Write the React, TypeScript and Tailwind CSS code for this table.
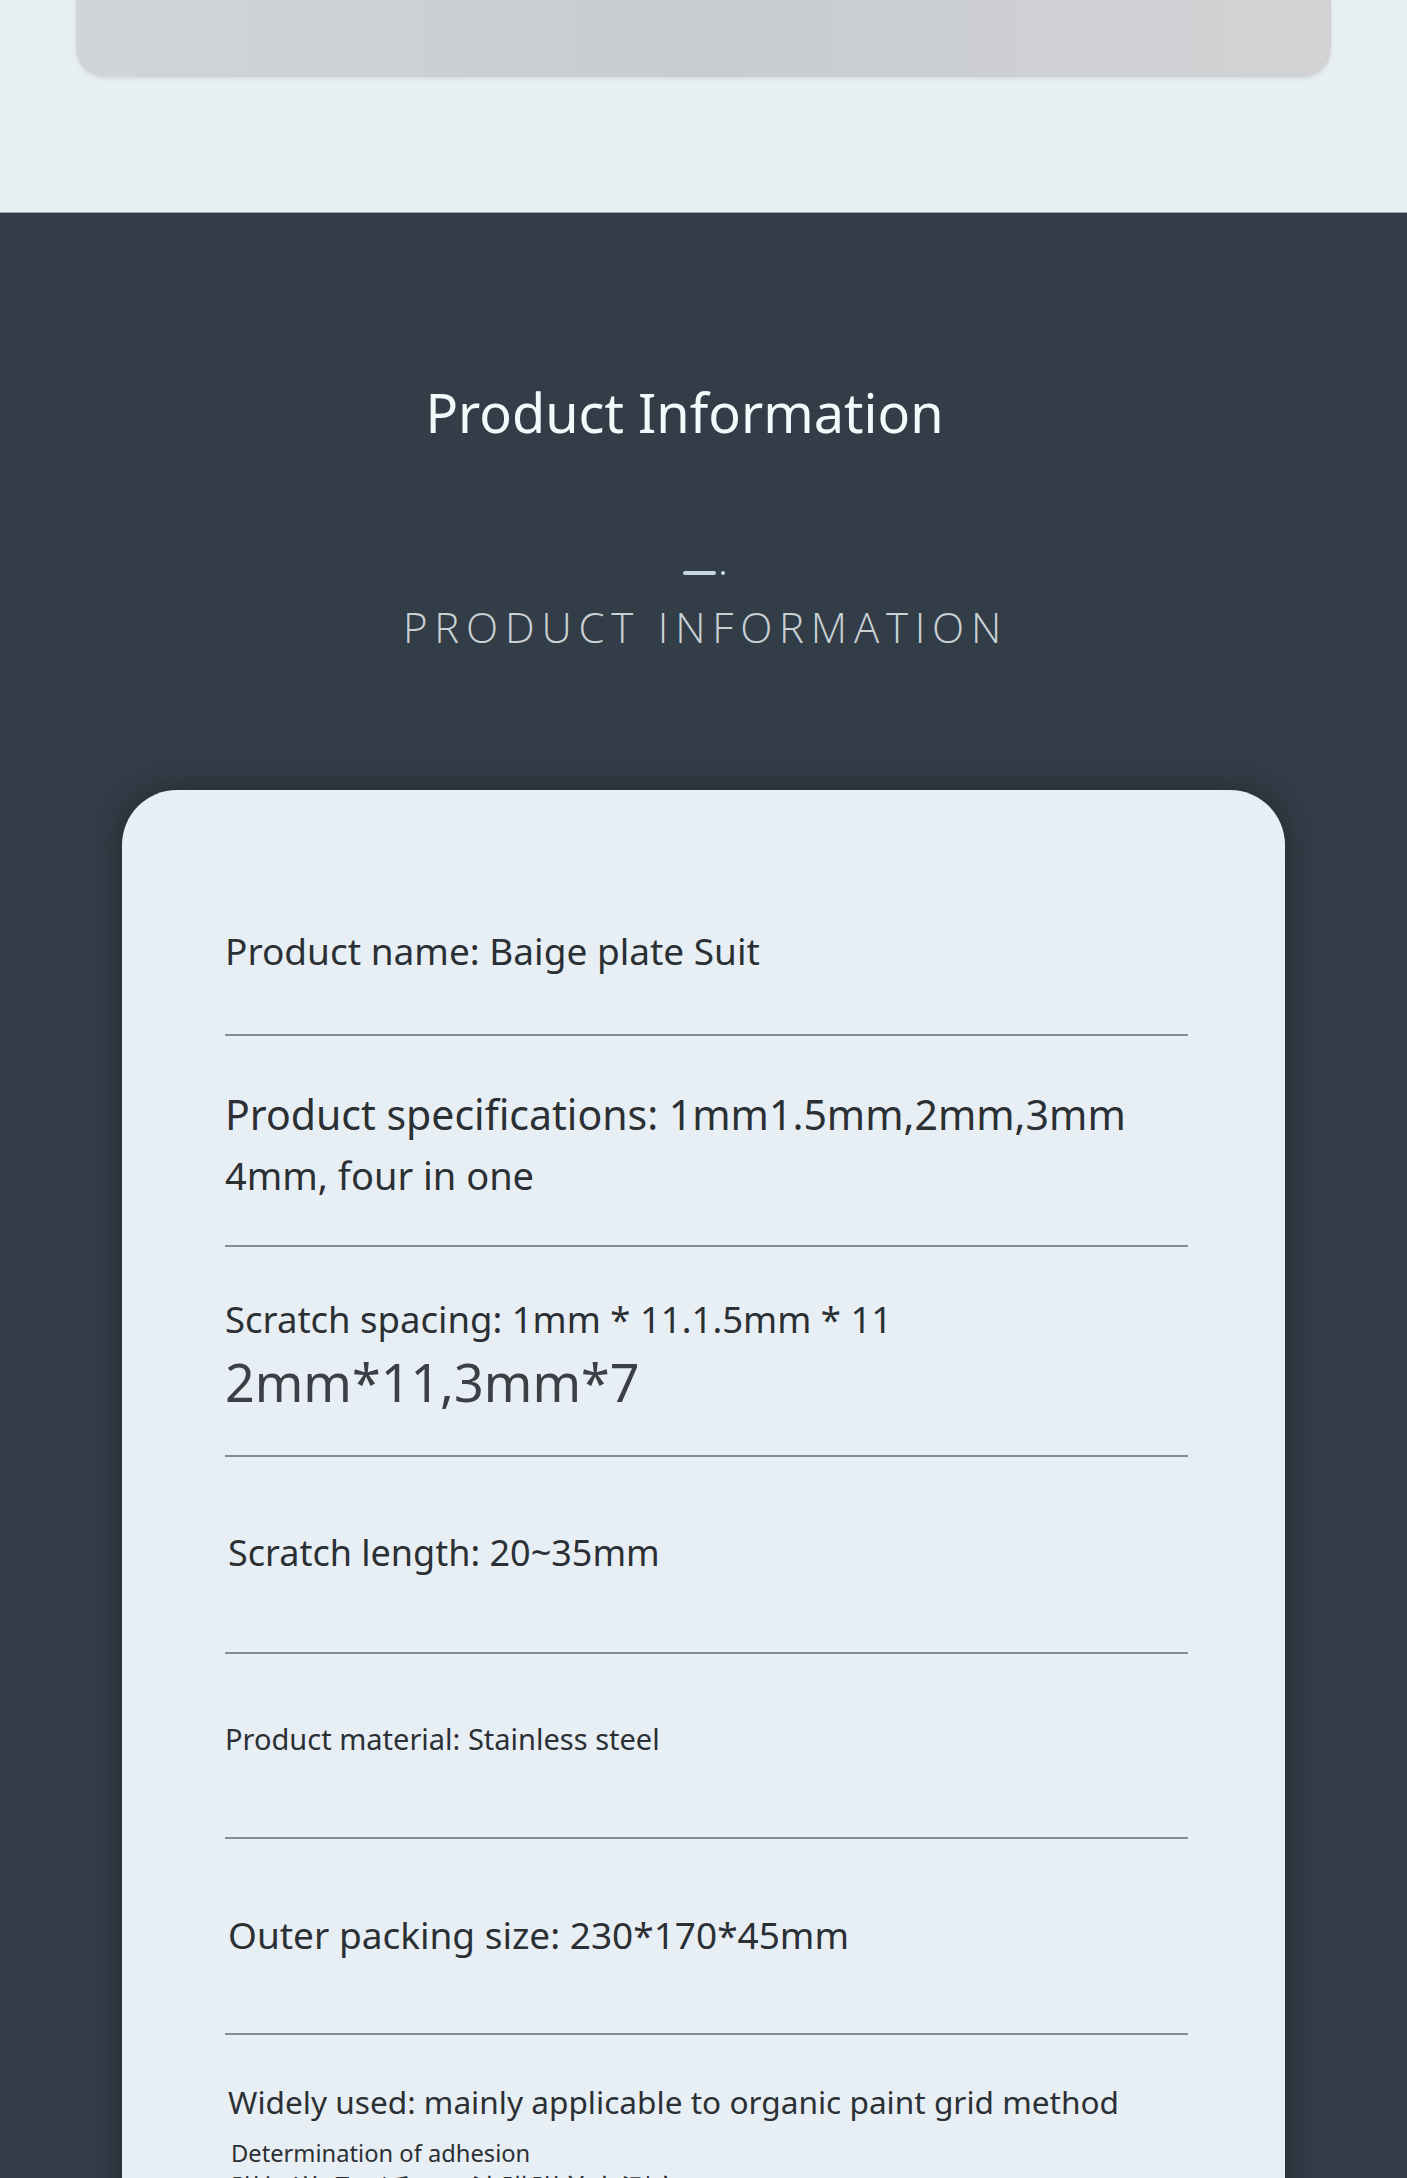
import React from "react";

const rowFont = { fontFamily: '"Noto Sans", "Noto Sans CJK SC", sans-serif' };

function Divider() {
  return <div className="h-[2px] w-full bg-[#868c93]" />;
}

export default function App() {
  return (
    <div className="min-h-[2178px] w-full overflow-hidden bg-[#333d47]" style={rowFont}>
      {/* top strip with the end of the previous picture */}
      <div className="h-[212px] bg-[#e8eff3] px-[76px]">
        <div className="h-[77px] w-full rounded-b-[28px] bg-linear-to-r from-[#d2d5d8] via-[#c8ccd0] to-[#d3d3d5] shadow-[0_2px_4px_rgba(0,0,0,0.08)]" />
      </div>

      <section className="border-t border-[#9aa6ae] pt-[167px]">
        <div className="flex justify-center pr-[38px]">
          <h1 className="text-[54px] leading-[64px] font-normal text-[#f2fbfc]">Product Information</h1>
        </div>

        <div className="mt-[127px] flex justify-center gap-[5px] items-center">
          <span className="block h-[4px] w-[33px] rounded-full bg-[#c6d6df]" />
          <span className="block h-[4px] w-[4px] rounded-full bg-[#c6d6df]" />
        </div>

        <div className="mt-[27px] flex justify-center pl-[4px]">
          <p
            className="text-[42px] leading-[50px] font-light tracking-[6.8px] text-[#c9d1d6]"
            style={{ fontFamily: '"Open Sans", "Noto Sans", sans-serif' }}
          >
            PRODUCT INFORMATION
          </p>
        </div>

        <div className="mx-[122px] mt-[138px] rounded-t-[55px] bg-[#e8eff4] pl-[103px] pr-[97px] shadow-[0_0_30px_rgba(0,0,0,0.35)] text-[#2b3035]">
          <div className="h-[244px] pt-[136px]">
            <p className="text-[37px] leading-[50px]">Product name: Baige plate Suit</p>
          </div>
          <Divider />

          <div className="h-[209px] pt-[48px]">
            <p className="text-[41px] leading-[61px]">Product specifications: 1mm1.5mm,2mm,3mm</p>
            <p className="text-[38px] leading-[61px]">4mm, four in one</p>
          </div>
          <Divider />

          <div className="h-[208px] pt-[50px]">
            <p className="text-[36.5px] leading-[44px]">Scratch spacing: 1mm * 11.1.5mm * 11</p>
            <p className="mt-[12px] text-[52px] leading-[58px] text-[#3a4045]">2mm*11,3mm*7</p>
          </div>
          <Divider />

          <div className="h-[195px] pt-[73px] pl-[3px]">
            <p className="text-[36px] leading-[46px]">Scratch length: 20~35mm</p>
          </div>
          <Divider />

          <div className="h-[183px] pt-[64px]">
            <p className="text-[29px] leading-[42px]">Product material: Stainless steel</p>
          </div>
          <Divider />

          <div className="h-[194px] pt-[71px] pl-[3px]">
            <p className="text-[37px] leading-[50px]">Outer packing size: 230*170*45mm</p>
          </div>
          <Divider />

          <div className="pt-[45px] pl-[3px] pb-[40px]">
            <p className="text-[31.6px] leading-[44px]">Widely used: mainly applicable to organic paint grid method</p>
            <p className="mt-[12px] pl-[3px] text-[23.7px] leading-[34px]">Determination of adhesion</p>
            <p className="pl-[3px] text-[30px] leading-[40px]">附加说明：适用于漆膜附着力测定</p>
          </div>
        </div>
      </section>
    </div>
  );
}
